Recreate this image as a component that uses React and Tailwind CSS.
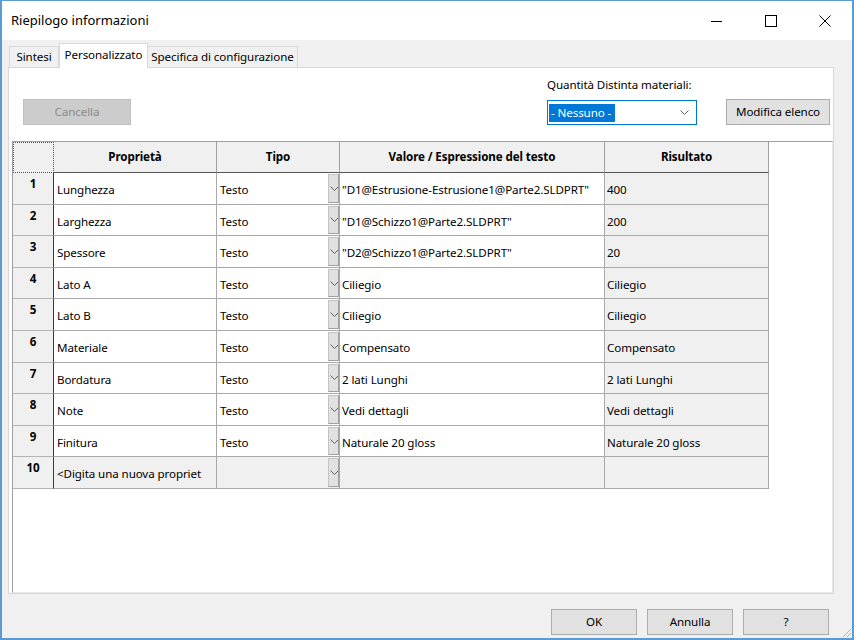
import React from 'react'

const rows = [
  ['Lunghezza', 'Testo', '"D1@Estrusione-Estrusione1@Parte2.SLDPRT"', '400'],
  ['Larghezza', 'Testo', '"D1@Schizzo1@Parte2.SLDPRT"', '200'],
  ['Spessore', 'Testo', '"D2@Schizzo1@Parte2.SLDPRT"', '20'],
  ['Lato A', 'Testo', 'Ciliegio', 'Ciliegio'],
  ['Lato B', 'Testo', 'Ciliegio', 'Ciliegio'],
  ['Materiale', 'Testo', 'Compensato', 'Compensato'],
  ['Bordatura', 'Testo', '2 lati Lunghi', '2 lati Lunghi'],
  ['Note', 'Testo', 'Vedi dettagli', 'Vedi dettagli'],
  ['Finitura', 'Testo', 'Naturale 20 gloss', 'Naturale 20 gloss'],
]

const Chevron = ({ className }) => (
  <svg width="9" height="5" viewBox="0 0 9 5" className={className}>
    <path d="M0.5 0.5 L4.5 4.5 L8.5 0.5" fill="none" stroke="#606060" strokeWidth="1" />
  </svg>
)

const DropBtn = () => (
  <div className="w-[11px] self-stretch mt-[1px] mb-[1px] bg-[#e1e1e1] border border-[#c4c4c4] border-b-[#a0a0a0] border-r-[#a0a0a0] flex items-center pl-[1px] overflow-hidden">
    <Chevron className="shrink-0" />
  </div>
)

const Row = ({ n, cells, isNew }) => {
  const base = isNew ? 'bg-[#f0f0f0]' : 'bg-white'
  return (
    <div className="flex h-[31.6px] shrink-0">
      <div className="w-[41px] shrink-0 bg-[#f0f0f0] border-r border-r-[#3a3a3a] border-b border-b-[#b4b4b4] flex justify-center pt-[2px] font-bold text-black">
        {n}
      </div>
      <div className={`w-[163px] shrink-0 ${base} border-r border-b border-[#a9a9a9] flex items-center pl-[3px] pt-[3px]`}>
        {cells[0]}
      </div>
      <div className={`w-[123px] shrink-0 ${base} border-r border-b border-[#a9a9a9] flex items-stretch`}>
        <div className="flex-1 flex items-center pl-[3px] pt-[3px]">{cells[1]}</div>
        <DropBtn />
      </div>
      <div className={`w-[265px] shrink-0 ${base} border-r border-b border-[#a9a9a9] flex items-center pl-[2px] pt-[3px] whitespace-nowrap`}>
        {cells[2]}
      </div>
      <div className="w-[164px] shrink-0 bg-[#f0f0f0] border-r border-b border-[#a9a9a9] flex items-center pl-[2px] pt-[3px]">
        {cells[3]}
      </div>
    </div>
  )
}

const Btn = ({ children, className = '' }) => (
  <div className={`h-[26px] bg-[#e1e1e1] border border-[#adadad] flex items-center justify-center text-black ${className}`}>
    {children}
  </div>
)

export default function App() {
  return (
    <div className="w-[854px] h-[640px] relative bg-[#f0f0f0] border-x-2 border-b-2 border-t border-[#5b9bd5] flex flex-col text-[11.6px] tracking-[-0.1px] text-black overflow-hidden" style={{ fontFamily: '"Noto Sans", "Open Sans", sans-serif' }}>
      {/* title bar */}
      <div className="h-[39px] shrink-0 bg-white flex items-center">
        <div className="pl-[9px] text-[13px] tracking-normal flex-1">Riepilogo informazioni</div>
        <div className="flex h-full">
          <div className="w-[54px] flex items-center justify-center">
            <svg width="12" height="12" viewBox="0 0 12 12"><path d="M0 6.5 H11" stroke="#000" strokeWidth="1" /></svg>
          </div>
          <div className="w-[54px] flex items-center justify-center">
            <svg width="12" height="12" viewBox="0 0 12 12"><rect x="0.5" y="0.5" width="11" height="11" fill="none" stroke="#000" strokeWidth="1" /></svg>
          </div>
          <div className="w-[54px] flex items-center justify-center">
            <svg width="12" height="12" viewBox="0 0 12 12"><path d="M0.5 0.5 L11.5 11.5 M11.5 0.5 L0.5 11.5" stroke="#000" strokeWidth="1" /></svg>
          </div>
        </div>
      </div>

      {/* tabs */}
      <div className="mt-[3px] h-[24px] shrink-0 flex items-end pl-[7px]">
        <div className="w-[50px] h-[21px] border border-b-0 border-[#d9d9d9] bg-[#f0f0f0] flex items-center justify-center">Sintesi</div>
        <div className="w-[89px] h-[25px] -mb-px relative z-10 border border-b-0 border-[#d9d9d9] bg-white flex items-center justify-center pb-[2px]">Personalizzato</div>
        <div className="w-[150px] h-[21px] border border-b-0 border-l-0 border-[#d9d9d9] bg-[#f0f0f0] flex items-center justify-center">Specifica di configurazione</div>
      </div>

      {/* page */}
      <div className="ml-[6px] w-[826px] h-[527px] shrink-0 bg-white border border-[#d9d9d9] flex flex-col">
        <div className="h-[73px] shrink-0 flex items-end pb-[16px]">
          <div className="ml-[14px] w-[108px] h-[26px] bg-[#cccccc] border border-[#bfbfbf] text-[#8a8a8a] flex items-center justify-center">Cancella</div>
          <div className="flex-1" />
          <div className="flex flex-col">
            <div className="h-[16px] leading-[16px] mb-[7px]">Quantità Distinta materiali:</div>
            <div className="w-[150px] h-[25px] border border-[#0078d7] bg-white flex items-center pl-[1px] pr-[7px]">
              <div className="h-[18px] bg-[#0078d7] text-white flex items-center px-[2px] w-[66px]">- Nessuno -</div>
              <div className="flex-1" />
              <Chevron />
            </div>
          </div>
          <Btn className="ml-[29px] mr-[3px] w-[104px]">Modifica elenco</Btn>
        </div>

        {/* grid */}
        <div className="ml-[3px] flex-1 border-t border-l border-t-[#a0a0a0] border-l-[#a0a0a0] border-r border-b border-r-[#e8e8e8] border-b-[#e8e8e8] flex flex-col bg-white">
          <div className="flex h-[31px] shrink-0 font-bold">
            <div className="w-[41px] shrink-0 bg-[#f0f0f0] border border-dotted border-[#555]" />
            <div className="w-[163px] shrink-0 bg-[#f0f0f0] border-r border-b border-r-[#a0a0a0] border-b-[#555] flex items-center justify-center">Proprietà</div>
            <div className="w-[123px] shrink-0 bg-[#f0f0f0] border-r border-b border-r-[#a0a0a0] border-b-[#555] flex items-center justify-center">Tipo</div>
            <div className="w-[265px] shrink-0 bg-[#f0f0f0] border-r border-b border-r-[#a0a0a0] border-b-[#555] flex items-center justify-center">Valore / Espressione del testo</div>
            <div className="w-[164px] shrink-0 bg-[#f0f0f0] border-r border-b border-r-[#a0a0a0] border-b-[#555] flex items-center justify-center">Risultato</div>
          </div>
          {rows.map((r, i) => (
            <Row key={i} n={i + 1} cells={r} />
          ))}
          <Row n={10} cells={['<Digita una nuova propriet', '', '', '']} isNew />
        </div>
      </div>

      {/* bottom buttons */}
      <div className="flex-1 flex items-start justify-end pt-[15px] pr-[23px] gap-[10px]">
        <Btn className="w-[86px]">OK</Btn>
        <Btn className="w-[86px]">Annulla</Btn>
        <Btn className="w-[86px]">?</Btn>
      </div>

      <svg width="12" height="12" viewBox="0 0 12 12" className="absolute right-0 bottom-0">
        <path d="M11 3 L3 11 M11 7 L7 11 M11 11 L11 11" stroke="#b0b0b0" strokeWidth="1" />
      </svg>
    </div>
  )
}
